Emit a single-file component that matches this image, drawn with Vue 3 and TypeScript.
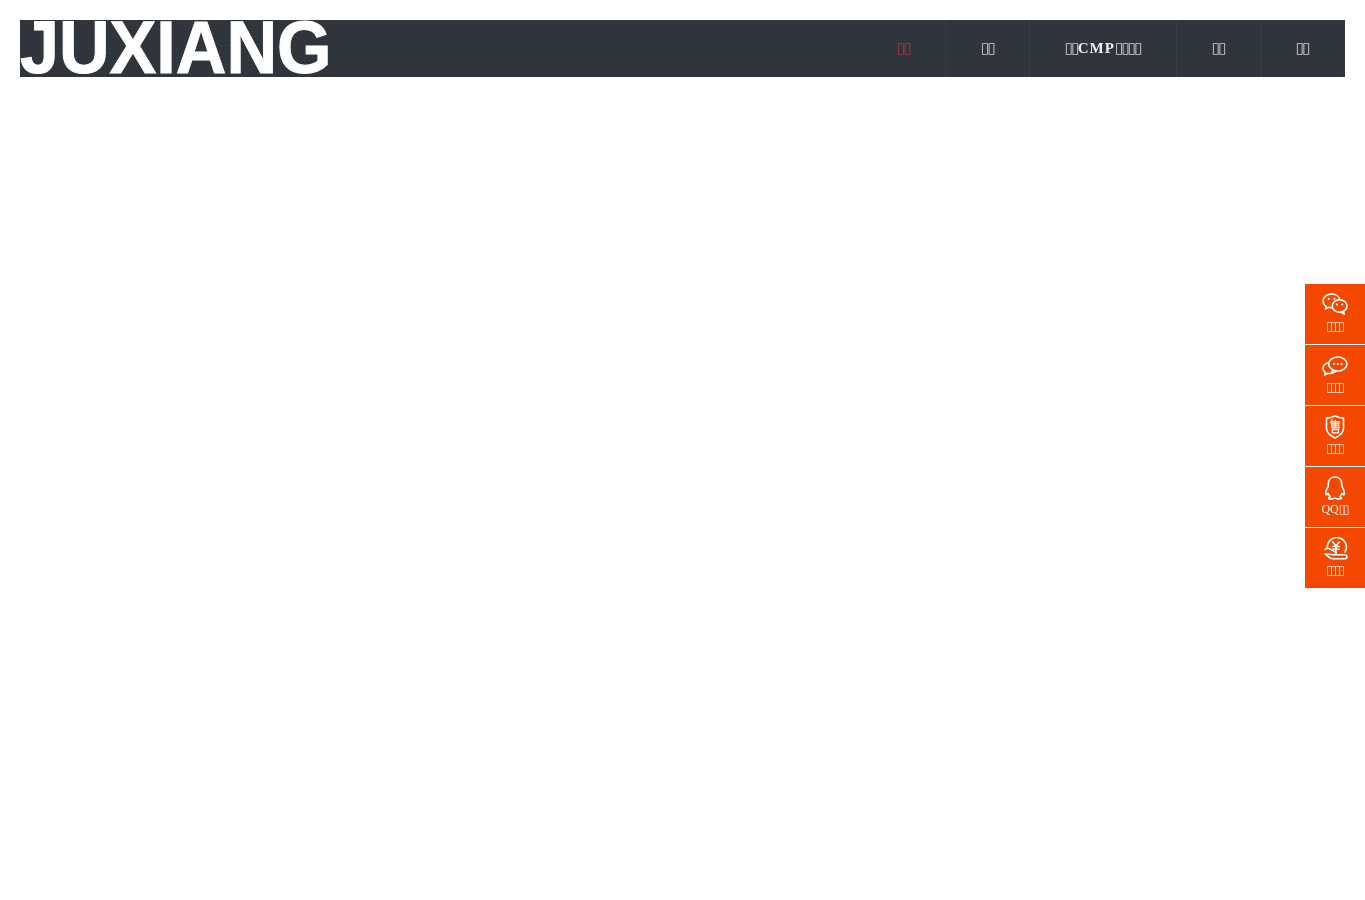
<script setup lang="ts">
const BOX = '\u25AF'

interface Run { text: string; box: boolean }

function runs(label: string): Run[] {
  return (label.match(/\u25AF+|[^\u25AF]+/g) ?? []).map((text) => ({ text, box: text[0] === BOX }))
}

const nav = [
  { label: BOX + BOX, active: true },
  { label: BOX + BOX },
  { label: BOX + BOX + 'CMP' + BOX + BOX + BOX + BOX },
  { label: BOX + BOX },
  { label: BOX + BOX },
]
const side = [
  { icon: 'wechat', label: BOX + BOX + BOX + BOX },
  { icon: 'chat', label: BOX + BOX + BOX + BOX },
  { icon: 'shield', label: BOX + BOX + BOX + BOX },
  { icon: 'qq', label: 'QQ' + BOX + BOX },
  { icon: 'money', label: BOX + BOX + BOX + BOX },
]
</script>

<template>
  <div class="page">
    <header class="bar">
      <div class="logo"><span class="logo-text">JUXIANG</span></div>
      <nav class="nav">
        <a v-for="(n, i) in nav" :key="i" class="item" :class="{ active: n.active }">
          <span v-for="(r, j) in runs(n.label)" :key="j" :class="{ box: r.box }">{{ r.text }}</span>
        </a>
      </nav>
    </header>
    <aside class="side">
      <div v-for="s in side" :key="s.icon" class="tile">
        <svg class="ico" viewBox="0 0 26 24" fill="none" stroke="#fff" stroke-width="1.6" stroke-linejoin="round" stroke-linecap="round">
          <template v-if="s.icon === 'wechat'">
            <path d="M17.800 6.600C17 3.500 13.700 1 9.700 1 5 1 1 4.200 1 8c0 2.200 1.200 4 3.200 5.300l-.7 2.600 3-1.600c1 .3 2 .4 3.200.4" />
            <ellipse cx="17.600" cy="13" rx="7.400" ry="6.200" />
            <path d="M21.300 18.200l.9 2.900-3.300-1.900" />
            <circle cx="6.800" cy="5.800" r="1.100" fill="#fff" stroke="none" /><circle cx="12.400" cy="5.800" r="1.100" fill="#fff" stroke="none" />
            <circle cx="15" cy="11.500" r="1.100" fill="#fff" stroke="none" /><circle cx="20.200" cy="11.500" r="1.100" fill="#fff" stroke="none" />
          </template>
          <template v-else-if="s.icon === 'chat'">
            <ellipse cx="15.800" cy="10" rx="9.200" ry="7" />
            <path d="M10.500 15.800l-.5 3.400 4.200-2.200" />
            <path d="M5.700 8.800C2.800 10 1 12.100 1 14.400c0 1.500.8 2.800 2.100 3.800l-.4 2.800 3.200-1.800c1.200.3 2.200.3 3.200.1" />
            <circle cx="12" cy="10" r="1.100" fill="#fff" stroke="none" /><circle cx="15.800" cy="10" r="1.100" fill="#fff" stroke="none" /><circle cx="19.600" cy="10" r="1.100" fill="#fff" stroke="none" />
          </template>
          <template v-else-if="s.icon === 'shield'">
            <path d="M13 .9C10.500 2.400 7.500 3.100 4.500 3.100v10.200c0 4.200 4 7.600 8.500 9.800 4.500-2.200 8.500-5.600 8.500-9.800V3.100C18.500 3.100 15.500 2.400 13 .9Z" />
            <path d="M10.300 4.800L8.600 7.800M9.600 6.600V12.800M9.600 6.800h8M13.300 5v7.800M9.600 8.800h7.600M9.600 10.800h7.600M9.600 12.800h8" stroke-width="1.200" />
            <path d="M10.300 14.600h6.200v3.300h-6.200Z" stroke-width="1.200" />
          </template>
          <template v-else-if="s.icon === 'qq'">
            <path d="M13 1C8.600 1 6.200 4.200 6.200 8.200v2.300C4.800 12.700 3.300 15.600 3.800 18c.2 1 .9.900 2.400-.6.400 1.400 1.200 2.500 2.200 3.300-1.500.4-2.100 1.100-1.800 1.700.5.800 3.500.9 5 .1.300-.3.500-.3 1.400-.3s1.100 0 1.400.3c1.500.8 4.500.7 5-.1.300-.6-.3-1.300-1.800-1.700 1-.8 1.800-1.900 2.200-3.300 1.500 1.500 2.200 1.600 2.400.6.500-2.400-1-5.300-2.400-7.500V8.200C19.800 4.200 17.400 1 13 1Z" />
          </template>
          <template v-else>
            <path d="M5.500 11.500A9.500 9.500 0 1 1 23 15" />
            <path d="M10.500 4.800L14 8.800l3.500-4M10.700 9.500h6.600M10.700 12.200h6.600M14 8.800v6.500" />
            <path d="M3 12.500c1.500-1.300 3.500-1.500 5-.5 1.500.9 3 2 5 2.700 1.800.6 1.500 3 0 3H10m3 0H22c2 0 3 .9 3 2 0 1.200-1 2-2.500 2H11c-2.200 0-3.500-1-5-2.400L3 17Z" />
          </template>
        </svg>
        <span class="cap">
          <span v-for="(r, j) in runs(s.label)" :key="j" :class="{ box: r.box }">{{ r.text }}</span>
        </span>
      </div>
    </aside>
  </div>
</template>

<style scoped>
.page {
  padding: 20px;
  font-family: "Liberation Serif", serif;
}
.bar {
  height: 57px;
  display: flex;
  justify-content: space-between;
  background-color: #2f343b;
  background-image: radial-gradient(circle at 1px 1px, #33383f 0.7px, transparent 0.8px);
  background-size: 4px 4px;
}
.logo {
  width: 310px;
  font: bold 74px/55px "Liberation Sans", sans-serif;
  color: #fff;
  white-space: nowrap;
}
.logo-text {
  display: inline-block;
  -webkit-text-stroke: 1px #fff;
  transform: scaleX(0.947);
  transform-origin: 0 50%;
}
.nav { display: flex; will-change: transform; }
.item {
  display: block;
  padding: 0 35px;
  line-height: 57px;
  font-size: 15px;
  font-weight: 700;
  letter-spacing: 1px;
  color: #f0f0f0;
  border-right: 1px solid #383d44;
  white-space: nowrap;
}
.item:last-child { border-right-color: transparent; }
.item.active { color: #d6333f; }
.item .box {
  font: 400 15px/1 "DejaVu Sans", sans-serif;
  letter-spacing: -1.8px;
  opacity: 0.8;
}
.side {
  position: fixed;
  right: 0;
  top: 284px;
  width: 60px;
  display: flex;
  flex-direction: column;
  gap: 1px;
  will-change: transform;
}
.tile {
  height: 60px;
  background: #f44800;
  color: #fff;
  display: flex;
  flex-direction: column;
  align-items: center;
  padding-top: 9px;
  box-sizing: border-box;
}
.ico { width: 26px; height: 24px; display: block; }
.cap { font-size: 12px; line-height: 14px; margin-top: 2px; padding-right: 2px; white-space: nowrap; }
.cap .box {
  font: 400 12px/1 "DejaVu Sans", sans-serif;
  letter-spacing: -2.66px;
  opacity: 0.8;
}
</style>
